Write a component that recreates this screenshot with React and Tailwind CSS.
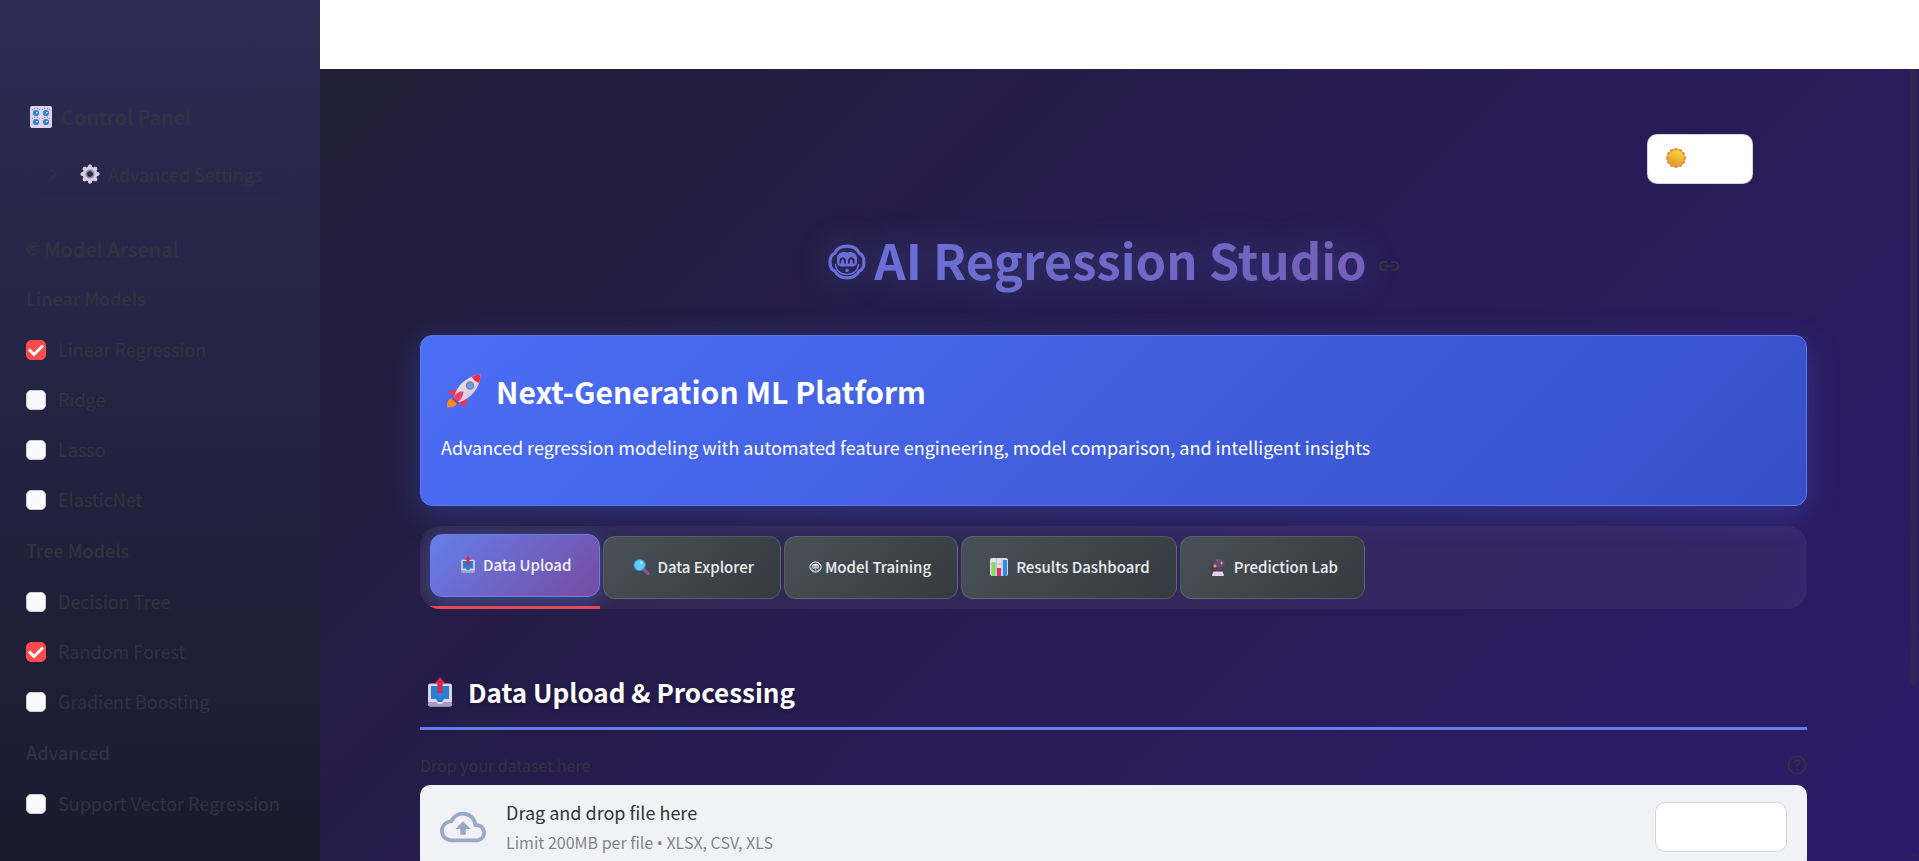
import { useState } from "react";

function Robot({ className }) {
  return (
    <svg viewBox="0 0 38 36" className={className} aria-hidden="true" fill="none" stroke="currentColor">
      <path d="M19 2.200c-5 0-10 2.300-12.200 7C3.500 10.500 2 13.800 2 18s1.800 8 5 9.200C9.300 31.500 14 33.800 19 33.800s9.700-2.300 12-6.600c3.200-1.200 5-5 5-9.200s-1.500-7.500-4.800-8.800C29 4.500 24 2.200 19 2.200Z" strokeWidth="3.200" />
      <path d="M9 14.500c0-4 3-6.500 7-6.500 1.200 0 2 .5 3 .5s1.800-.5 3-.5c4 0 7 2.500 7 6.500v3.500c0 3-2.400 4.500-5 4.500H14c-2.600 0-5-1.500-5-4.500Z" fill="currentColor" stroke="none" />
      <path d="M12.200 19.500c0-7 5-7 5 0M20.800 19.500c0-7 5-7 5 0" stroke="#281f52" strokeWidth="1.800" />
      <path d="M7.500 20C7.500 26 12.500 30.500 19 30.500S30.500 26 30.500 20" strokeWidth="1.500" />
      <circle cx="19" cy="26.500" r="1.800" fill="currentColor" stroke="none" />
    </svg>
  );
}

function Knobs({ className }) {
  const dots = [[6, 7], [16, 7], [6, 16], [16, 16]];
  return (
    <svg viewBox="0 0 22 22" className={className} aria-hidden="true">
      <rect width="22" height="22" rx="2" fill="#ddd3ea" />
      {dots.map(([x, y]) => (
        <g key={`${x}-${y}`}>
          <path d={`M${x - 3} ${y - 3}l-.8-1M${x - 1.200} ${y - 4}l-.3-1.200M${x + 1.200} ${y - 4}l.3-1.200M${x + 3} ${y - 3}l.8-1`} stroke="#6d6474" strokeWidth=".8" />
          <circle cx={x} cy={y} r="3.100" fill="#2f83cf" />
          <path d={`M${x} ${y}l1.600-.8`} stroke="#d9efff" strokeWidth="1.200" />
        </g>
      ))}
    </svg>
  );
}

function Gear({ className }) {
  return (
    <svg viewBox="0 0 20 20" className={className} aria-hidden="true">
      <g fill="#d8cde6">
        {[0, 45, 90, 135, 180, 225, 270, 315].map((a) => (
          <path key={a} d="M7.800 5 8 1.800Q10-1.200 12 1.800L12.200 5Z" transform={`rotate(${a} 10 10)`} />
        ))}
      </g>
      <circle cx="10" cy="10" r="5.200" fill="none" stroke="#d8cde6" strokeWidth="4.400" />
      <circle cx="10" cy="10" r="3.800" fill="none" stroke="#8d8499" strokeWidth="1.400" />
    </svg>
  );
}

function Sun({ className }) {
  return (
    <svg viewBox="0 0 20 20" className={className} aria-hidden="true">
      <defs>
        <linearGradient id="sun" x1=".7" y1="0" x2=".3" y2="1">
          <stop stopColor="#ffd43a" />
          <stop offset="1" stopColor="#d99a2c" />
        </linearGradient>
      </defs>
      <g fill="#f0873a">
        {[0, 30, 60, 90, 120, 150, 180, 210, 240, 270, 300, 330].map((a) => (
          <circle key={a} cx="10" cy="2.300" r="2.300" transform={`rotate(${a} 10 10)`} />
        ))}
      </g>
      <circle cx="10" cy="10" r="8" fill="url(#sun)" />
    </svg>
  );
}

function Rocket({ className }) {
  return (
    <svg viewBox="0 0 34 34" className={className} aria-hidden="true">
      <defs>
        <linearGradient id="hull" x1="0" y1="0" x2="1" y2="1">
          <stop stopColor="#f3eef7" />
          <stop offset="1" stopColor="#c9bcd6" />
        </linearGradient>
      </defs>
      <path d="M0 33.500C-.5 28.500 1 25 4.500 24.500c3.500 0 5.500 2.500 5 5-.8 3-2.800 2.500-3.800 4-1.700-1-3.200.3-5.700 0Z" fill="#f58a25" />
      <path d="M11 15.500C6 15.500 2.500 16.500 1 19.500l6.500 2ZM20 24c.5 4-1 7-3 9.500L12 28.500Z" fill="#e83463" />
      <path d="M7 24C9 12 19 2.500 33.500.5 33 14 24.500 24.500 11.500 28.500Z" fill="url(#hull)" />
      <path d="M25 2.800C28 1.200 30.500.6 33.500.5c0 3-.4 5.500-1.500 8.200C29.500 8.500 26 6 25 2.800Z" fill="#f32c45" />
      <path d="M6 25.500c2-6 5.500-8.500 10.500-8C16 22 14 26.500 9.500 29Z" fill="#f23c6a" />
      <path d="M5.500 24.500l6 5" stroke="#5a4a78" strokeWidth="1.600" />
      <circle cx="23" cy="11.500" r="3.500" fill="#4fa9ee" stroke="#877e9c" strokeWidth="1.600" />
    </svg>
  );
}

function Outbox({ className }) {
  return (
    <svg viewBox="0 0 24 30" className={className} aria-hidden="true">
      <rect y="6.500" width="24" height="23" rx="2.500" fill="#dcd3e8" />
      <path d="M0 25h8l2 2h4l2-2h8v2a2.500 2.500 0 0 1-2.500 2.500h-19A2.500 2.500 0 0 1 0 27Z" fill="#a79abc" />
      <path d="M3 9h18v13h-5l-2 3h-4l-2-3H3Z" fill="#2680d8" />
      <path d="M12 0l5.200 6.200h-2.600V16H9.400V6.200H6.800Z" fill="#d9274f" />
    </svg>
  );
}

function Lens({ className }) {
  return (
    <svg viewBox="0 0 18 18" className={className} aria-hidden="true">
      <path d="M11.500 11.500l4.500 4.500" stroke="#8b4f9b" strokeWidth="3.600" strokeLinecap="round" />
      <circle cx="7" cy="7" r="6" fill="#5fd0ee" stroke="#3b8fd0" strokeWidth="1.200" />
      <circle cx="9" cy="4.500" r="1.200" fill="#c6f3fb" />
    </svg>
  );
}

function Bars({ className }) {
  return (
    <svg viewBox="0 0 18 18" className={className} aria-hidden="true">
      <rect width="18" height="18" rx="2" fill="#e3dbea" />
      <path d="M0 6h18M0 12h18M6.500 0v18M12 0v18" stroke="#b8aec4" strokeWidth=".6" />
      <path d="M1.500 4h4v14H2.500a1 1 0 0 1-1-1Z" fill="#86dc62" />
      <path d="M7 10h4v8H7Z" fill="#e32a68" />
      <path d="M13 2h4v15a1 1 0 0 1-1 1h-3Z" fill="#2a8fe8" />
    </svg>
  );
}

function Crystal({ className }) {
  return (
    <svg viewBox="0 0 14 18" className={className} aria-hidden="true">
      <defs>
        <radialGradient id="ball" cx=".65" cy=".35" r=".7">
          <stop stopColor="#6d5c80" />
          <stop offset="1" stopColor="#45334f" />
        </radialGradient>
      </defs>
      <circle cx="7" cy="7.200" r="7" fill="url(#ball)" />
      <path d="M2.500 13.500h9L13 17q0 1-1 1H2q-1 0-1-1Z" fill="#e3d0ef" />
      <path d="M4 5.500L4.700 7.300L6.500 8L4.700 8.700L4 10.500L3.300 8.700L1.500 8L3.300 7.300ZM10.700 3L11.200 4.500L12.700 5L11.200 5.500L10.700 7L10.200 5.500L8.700 5L10.200 4.500ZM6.200 1.200L6.800 2.200L6.200 3.200L5.600 2.200Z" fill="#f9a740" />
    </svg>
  );
}

function CheckRow({ label, defaultChecked }) {
  return (
    <label className="flex h-[50px] items-center gap-3 text-[18px]">
      <span className="grid size-5 shrink-0">
        <input
          type="checkbox"
          defaultChecked={defaultChecked}
          className="peer col-start-1 row-start-1 size-5 appearance-none rounded-[5px] border border-[#c9c9d2] bg-[#fafafd] checked:border-[#ff4b4b] checked:bg-[#ff4b4b]"
        />
        <svg viewBox="0 0 20 20" className="pointer-events-none invisible col-start-1 row-start-1 size-5 peer-checked:visible" fill="none" stroke="#fff" strokeWidth="3" aria-hidden="true">
          <path d="M3 9.500 8 14.500 17 5.500" />
        </svg>
      </span>
      <span className="pb-[2px] leading-6">{label}</span>
    </label>
  );
}

const groups = [
  { title: "Linear Models", models: [["Linear Regression", true], ["Ridge"], ["Lasso"], ["ElasticNet"]] },
  { title: "Tree Models", models: [["Decision Tree"], ["Random Forest", true], ["Gradient Boosting"]] },
  { title: "Advanced", models: [["Support Vector Regression"]] },
];

function Sidebar() {
  return (
    <aside className="w-80 shrink-0 bg-linear-to-b from-[#2c2c54] to-[#1a1a2e] px-[26px] pt-[101px]">
      <h2 className="flex h-8 items-center gap-[9px] pl-1 text-[20px] leading-8 font-medium">
        <Knobs className="size-[22px]" />
        Control Panel
      </h2>
      <details className="mt-[17px] rounded-[10px] border border-[#31333f]/20">
        <summary className="flex h-12 list-none items-center pb-[2px] pl-[23px] text-[18px] leading-6">
          <svg viewBox="0 0 8 12" className="h-3 w-2" fill="none" stroke="currentColor" strokeWidth="2" aria-hidden="true">
            <path d="M1 1l5 5-5 5" />
          </svg>
          <Gear className="mr-2 ml-[22px] size-5" />
          Advanced Settings
        </summary>
      </details>
      <h2 className="mt-[33px] mb-2 flex h-8 items-center gap-[3px] text-[20px] leading-8 font-medium">
        <Robot className="h-[14px] w-[15px]" />
        Model Arsenal
      </h2>
      {groups.map((group) => (
        <fieldset key={group.title}>
          <legend className="flex h-[52px] items-center pb-[2px] text-[18px] leading-6 font-medium">{group.title}</legend>
          {group.models.map(([label, checked]) => (
            <CheckRow key={label} label={label} defaultChecked={checked} />
          ))}
        </fieldset>
      ))}
    </aside>
  );
}

const tabs = [
  { label: "Data Upload", Icon: Outbox, icon: "h-[17px] w-[14px]", gap: "gap-2 pr-7 pl-[30px]" },
  { label: "Data Explorer", Icon: Lens, icon: "h-[18px] w-[17px]", gap: "gap-[7px] pr-[26px] pl-[29px]" },
  { label: "Model Training", Icon: Robot, icon: "h-3 w-[13px]", gap: "gap-[3px] pr-[26px] pl-6" },
  { label: "Results Dashboard", Icon: Bars, icon: "size-[18px]", gap: "gap-2 pr-[26px] pl-7" },
  { label: "Prediction Lab", Icon: Crystal, icon: "h-[18px] w-[14px]", gap: "gap-[9px] pr-[26px] pl-[30px]" },
];

function Tabs() {
  const [active, setActive] = useState("Data Upload");
  return (
    <div role="tablist" className="mt-5 flex h-[83px] gap-[3px] overflow-hidden rounded-[20px] bg-white/5 px-[10px] pt-2">
      {tabs.map(({ label, Icon, icon, gap }) => {
        const on = label === active;
        return (
          <div key={label} className={`flex flex-col justify-between border-b-3 ${on ? "border-[#ff4b4b]/90" : "border-transparent"}`}>
            <button
              type="button"
              role="tab"
              aria-selected={on}
              onClick={() => setActive(label)}
              className={`flex h-[63px] items-center rounded-xl border pb-[2px] text-[15px] leading-6 font-medium whitespace-nowrap text-white/90 ${gap} ${
                on
                  ? "border-[#667eea] bg-linear-[135deg,#667eea,#764ba2] shadow-[0_4px_20px_rgba(102,126,234,0.4)]"
                  : "mt-[2px] border-white/15 bg-linear-[135deg,#495057,#343a40]"
              }`}
            >
              <Icon className={icon} />
              {label}
            </button>
          </div>
        );
      })}
    </div>
  );
}

export default function App() {
  return (
    <div className="flex h-screen overflow-hidden bg-white font-['Noto_Sans_CJK_SC',sans-serif] text-[#31333f]">
      <Sidebar />
      <div className="flex min-w-0 flex-1 flex-col">
        <header className="h-[69px] shrink-0 bg-white" />
        <div className="flex min-h-0 flex-1 bg-linear-[135deg,#211e36_0%,#261c50_45%,#2d1b69_100%]">
          <main className="min-w-0 flex-1 overflow-hidden pt-[65px] pr-[103px] pl-[100px]">
            <div className="flex justify-end pr-[54px]">
              <button type="button" aria-label="Switch to light theme" className="flex h-[50px] w-[106px] items-center rounded-[10px] border border-[#31333f]/20 bg-white pb-[2px] pl-[18px]">
                <Sun className="size-5" />
              </button>
            </div>
            <div className="mt-9 flex h-[84px] items-center justify-center gap-2 text-[#7069cf]">
              <Robot className="h-9 w-[38px] text-[#696fd6] drop-shadow-[0_0_16px_rgba(102,126,234,0.3)]" />
              <h1 className="bg-linear-to-r from-[#6a70d8] to-[#7460b8] bg-clip-text pb-[6px] text-[49px] leading-[72px] font-bold text-transparent drop-shadow-[0_0_16px_rgba(102,126,234,0.3)]">
                AI Regression Studio
              </h1>
              <a href="#studio" aria-label="Link to heading" className="mt-2 ml-1 text-[#31333f]">
                <svg viewBox="0 0 20 10" className="h-[10px] w-5" fill="none" stroke="currentColor" strokeWidth="2" aria-hidden="true">
                  <path d="M8.500 1H5Q1 1 1 5t4 4h3.500M11.500 1H15q4 0 4 4t-4 4h-3.500M6 5h8" />
                </svg>
              </a>
            </div>
            <section className="mt-[31px] h-[171px] rounded-xl border border-[#5b79f5] bg-linear-[135deg,#4c6ef5,#364fc7] px-5 pt-[29px] text-white shadow-[0_8px_32px_rgba(76,110,245,0.3)]">
              <h2 className="flex h-[52px] items-center gap-[15px] pl-[6px] text-[30px] leading-[52px] font-bold">
                <Rocket className="size-[34px]" />
                Next-Generation ML Platform
              </h2>
              <p className="mt-4 text-[18px] leading-7">
                Advanced regression modeling with automated feature engineering, model comparison, and intelligent insights
              </p>
            </section>
            <Tabs />
            <h2 className="mt-[54px] flex h-[67px] items-center gap-4 border-b-3 border-[#667eea] pb-[6px] pl-2 text-[26px] leading-10 font-bold text-white [text-shadow:0_2px_4px_rgba(0,0,0,0.3)]">
              <Outbox className="h-[30px] w-6" />
              Data Upload &amp; Processing
            </h2>
            <div className="mt-[21px] flex h-[34px] items-start justify-between">
              <label htmlFor="dataset" className="mt-[2px] text-[16px] leading-6">Drop your dataset here</label>
              <svg viewBox="0 0 20 20" className="mt-1 size-5" fill="none" stroke="currentColor" strokeWidth="1.800" aria-hidden="true">
                <circle cx="10" cy="10" r="8.600" />
                <path d="M7.400 8q.2-2.600 2.600-2.600T12.600 7.800Q12.600 9 10 10.500V12M10 13.400v1.600" />
              </svg>
            </div>
            <section className="flex h-[84px] items-center rounded-[10px] bg-[#f0f2f6] px-5">
              <svg viewBox="0 0 24 24" className="size-[46px]" fill="#9aa7c7" aria-hidden="true">
                <path d="M19.350 10.040A7.490 7.490 0 0 0 12 4C9.110 4 6.600 5.640 5.350 8.040A5.994 5.994 0 0 0 0 14c0 3.310 2.690 6 6 6h13c2.760 0 5-2.240 5-5 0-2.640-2.050-4.780-4.650-4.960ZM19 18H6c-2.210 0-4-1.790-4-4 0-2.050 1.530-3.760 3.560-3.970l1.070-.11.5-.95A5.469 5.469 0 0 1 12 6c2.620 0 4.880 1.860 5.390 4.430l.3 1.500 1.530.11A2.980 2.980 0 0 1 22 15c0 1.650-1.350 3-3 3ZM8 13h2.550v3h2.900v-3H16l-4-4Z" />
              </svg>
              <div className="ml-5 flex-1 pb-[2px]">
                <p className="text-[18px] leading-8">Drag and drop file here</p>
                <p className="text-[16px] leading-7 text-[#31333f]/60">
                  Limit 200MB per file <span className="font-['Open_Sans',sans-serif]">•</span> XLSX, CSV, XLS
                </p>
              </div>
              <button id="dataset" type="button" aria-label="Browse files" className="h-[50px] w-[132px] rounded-[10px] border border-[#31333f]/20 bg-white" />
            </section>
          </main>
          <div className="flex w-[9px] shrink-0 flex-col justify-between pb-[2px]" aria-hidden="true">
            <div className="h-[617px] w-[7px] rounded-b-sm bg-[#2f2550]" />
            <svg viewBox="0 0 8 5" className="h-[5px] w-2" fill="#2f2550">
              <path d="M0 0h8L4 5Z" />
            </svg>
          </div>
        </div>
      </div>
    </div>
  );
}
